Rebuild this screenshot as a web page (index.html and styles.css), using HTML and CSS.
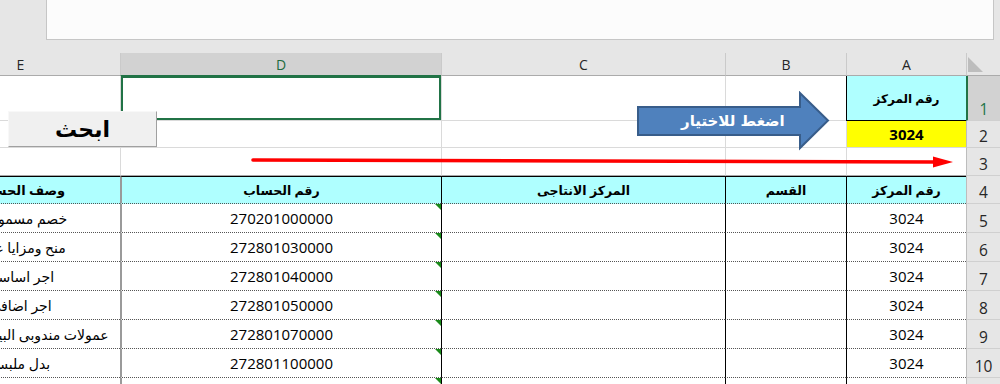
FILE: index.html
```html
<!DOCTYPE html>
<html lang="ar">
<head>
    <meta charset="UTF-8">
    <meta name="viewport" content="width=device-width, initial-scale=1.0">
    <title>بحث مركز التكلفة</title>
    <link rel="stylesheet" href="styles.css">
</head>
<body>
    <div class="page">
        <div class="topbar"><div class="formula"></div></div>

        <div class="sheet">
            <!-- column letters -->
            <div class="ch corner"><span class="tri"></span></div>
            <div class="ch">A</div>
            <div class="ch">B</div>
            <div class="ch">C</div>
            <div class="ch sel">D</div>
            <div class="ch">E</div>

            <!-- row 1 -->
            <div class="rh sel">1</div>
            <div class="c key">رقم المركز</div>
            <div class="c"></div>
            <div class="c"></div>
            <div class="c col-d active"></div>
            <div class="c col-e"></div>

            <!-- row 2 -->
            <div class="rh">2</div>
            <div class="c val">3024</div>
            <div class="c"></div>
            <div class="c"></div>
            <div class="c col-d"></div>
            <div class="c col-e"></div>

            <!-- row 3 -->
            <div class="rh">3</div>
            <div class="c last"></div>
            <div class="c last"></div>
            <div class="c last"></div>
            <div class="c col-d last"></div>
            <div class="c col-e last"></div>

            <!-- row 4: table head -->
            <div class="rh">4</div>
            <div class="th">رقم المركز</div>
            <div class="th">القسم</div>
            <div class="th">المركز الانتاجى</div>
            <div class="th col-d">رقم الحساب</div>
            <div class="th col-e">وصف الحساب</div>

            <div class="rh">5</div>
            <div class="td">3024</div>
            <div class="td"></div>
            <div class="td"></div>
            <div class="td col-d num">270201000000</div>
            <div class="td col-e">خصم مسموح به</div>

            <div class="rh">6</div>
            <div class="td">3024</div>
            <div class="td"></div>
            <div class="td"></div>
            <div class="td col-d num">272801030000</div>
            <div class="td col-e">منح ومزايا عينية</div>

            <div class="rh">7</div>
            <div class="td">3024</div>
            <div class="td"></div>
            <div class="td"></div>
            <div class="td col-d num">272801040000</div>
            <div class="td col-e">اجر اساسى</div>

            <div class="rh">8</div>
            <div class="td">3024</div>
            <div class="td"></div>
            <div class="td"></div>
            <div class="td col-d num">272801050000</div>
            <div class="td col-e">اجر اضافى</div>

            <div class="rh">9</div>
            <div class="td">3024</div>
            <div class="td"></div>
            <div class="td"></div>
            <div class="td col-d num">272801070000</div>
            <div class="td col-e">عمولات مندوبى البيع والتحصيل</div>

            <div class="rh">10</div>
            <div class="td">3024</div>
            <div class="td"></div>
            <div class="td"></div>
            <div class="td col-d num">272801100000</div>
            <div class="td col-e">بدل ملبس</div>

            <div class="rh">11</div>
            <div class="td">3024</div>
            <div class="td"></div>
            <div class="td"></div>
            <div class="td col-d num">272801110000</div>
            <div class="td col-e">بدل انتقال</div>
        </div>

        <!-- shapes drawn over the sheet -->
        <button class="search-btn">ابحث</button>

        <div class="pick">
            <svg width="194" height="60" viewBox="0 0 194 60">
                <polygon points="2,16 164,16 164,2 192,29.5 164,57 164,44 2,44" fill="#4f81bd" stroke="#385d8a" stroke-width="2"/>
            </svg>
            <span class="pick-label">اضغط للاختيار</span>
        </div>

        <svg class="red-arrow" width="706" height="22" viewBox="0 0 706 22">
            <line x1="3" y1="10" x2="686" y2="12" stroke="#ff0000" stroke-width="3.6" stroke-linecap="round"/>
            <polygon points="683,6.5 703,12 683,17.5" fill="#ff0000"/>
        </svg>
    </div>
</body>
</html>
```

FILE: styles.css
```css
* {
    box-sizing: border-box;
}
html, body {
    margin: 0;
    height: 100%;
    overflow: hidden;
    background: #fff;
}
body {
    font-family: "Open Sans", "DejaVu Sans", sans-serif;
    color: #000;
}
.page {
    position: relative;
    width: 1000px;
    height: 384px;
    overflow: hidden;
}

/* formula bar strip */
.topbar {
    height: 53px;
    background: #e6e6e6;
    padding: 0 6px 13px 46px;
}
.formula {
    height: 40px;
    background: #fcfcfc;
    border: 1px solid #c6c6c6;
    border-top: none;
}

/* sheet grid, right to left */
.sheet {
    direction: rtl;
    display: grid;
    grid-template-columns: 34px 120px 121px 284px 321px 200px;
    grid-template-rows: 23px 45px 27px 28px 28px repeat(7, 29px);
    overflow: hidden;
}
.ch {
    background: #e6e6e6;
    border-bottom: 1px solid #ababab;
    border-left: 1px solid #cacaca;
    display: flex;
    align-items: center;
    justify-content: center;
    font-size: 14px;
    color: #262626;
}
.ch.sel {
    background: #d2d2d2;
    color: #1d6b40;
    border-bottom-color: #217346;
}
.corner {
    align-items: flex-end;
    padding: 0 0 3px 1px;
}
.tri {
    width: 15px;
    height: 15px;
    margin-right: auto;
    background: #bdbdbd;
    clip-path: polygon(0 0, 0 100%, 100% 100%);
}
.rh {
    background: #e6e6e6;
    border-left: 1px solid #bdbdbd;
    border-bottom: 1px solid #d0d0d0;
    display: flex;
    align-items: flex-end;
    justify-content: center;
    padding-bottom: 3px;
    font-size: 15.5px;
    line-height: 1;
    color: #262626;
}
.rh.sel {
    background: #d2d2d2;
    color: #217346;
    border-left: 2px solid #217346;
}

/* rows 1-3 */
.c {
    border-left: 1px solid #dadada;
    border-bottom: 1px solid #dadada;
    display: flex;
    align-items: center;
    justify-content: center;
}
.c.last {
    border-bottom-color: #a6a6a6;
}
.c.key {
    background: #afffff;
    border-left-color: #000;
    border-bottom-color: #000;
    font-weight: bold;
    font-size: 12px;
}
.c.val {
    background: #ffff00;
    font-weight: bold;
    font-size: 15px;
}
.c.active {
    box-shadow: inset 0 0 0 2px #217346;
}

/* data table */
.th, .td {
    border-left: 1px solid #000;
    border-bottom: 1px dotted #555;
    display: flex;
    align-items: center;
    justify-content: center;
    white-space: nowrap;
}
.th {
    background: #afffff;
    border-top: 1px solid #000;
    font-weight: bold;
    font-size: 12.5px;
}
.td {
    font-size: 15px;
}
.th.col-d, .td.col-d {
    border-left: 2px solid #9a9a9a;
}
.col-e {
    overflow: hidden;
}
.th.col-e {
    font-size: 13px;
}
.td.col-e {
    font-size: 14px;
}
.num {
    position: relative;
}
.num::after {
    content: "";
    position: absolute;
    top: 0;
    right: 0;
    width: 6px;
    height: 6px;
    background: #1a8a1a;
    clip-path: polygon(0 0, 100% 0, 100% 100%);
}

/* shapes */
.search-btn {
    position: absolute;
    left: 8px;
    top: 111px;
    width: 149px;
    height: 36px;
    padding: 0;
    background: #f0f0f0;
    border: 1px solid;
    border-color: #f8f8f8 #a0a0a0 #a0a0a0 #f8f8f8;
    font: bold 22px "DejaVu Sans", sans-serif;
    color: #000;
}
.pick {
    position: absolute;
    left: 636px;
    top: 91px;
    width: 194px;
    height: 60px;
    display: grid;
}
.pick svg, .pick-label {
    grid-area: 1 / 1;
}
.pick-label {
    align-self: center;
    justify-self: start;
    margin-left: 45px;
    direction: rtl;
    color: #fff;
    font: bold 15px "DejaVu Sans", sans-serif;
}
.red-arrow {
    position: absolute;
    left: 250px;
    top: 150px;
}
```
